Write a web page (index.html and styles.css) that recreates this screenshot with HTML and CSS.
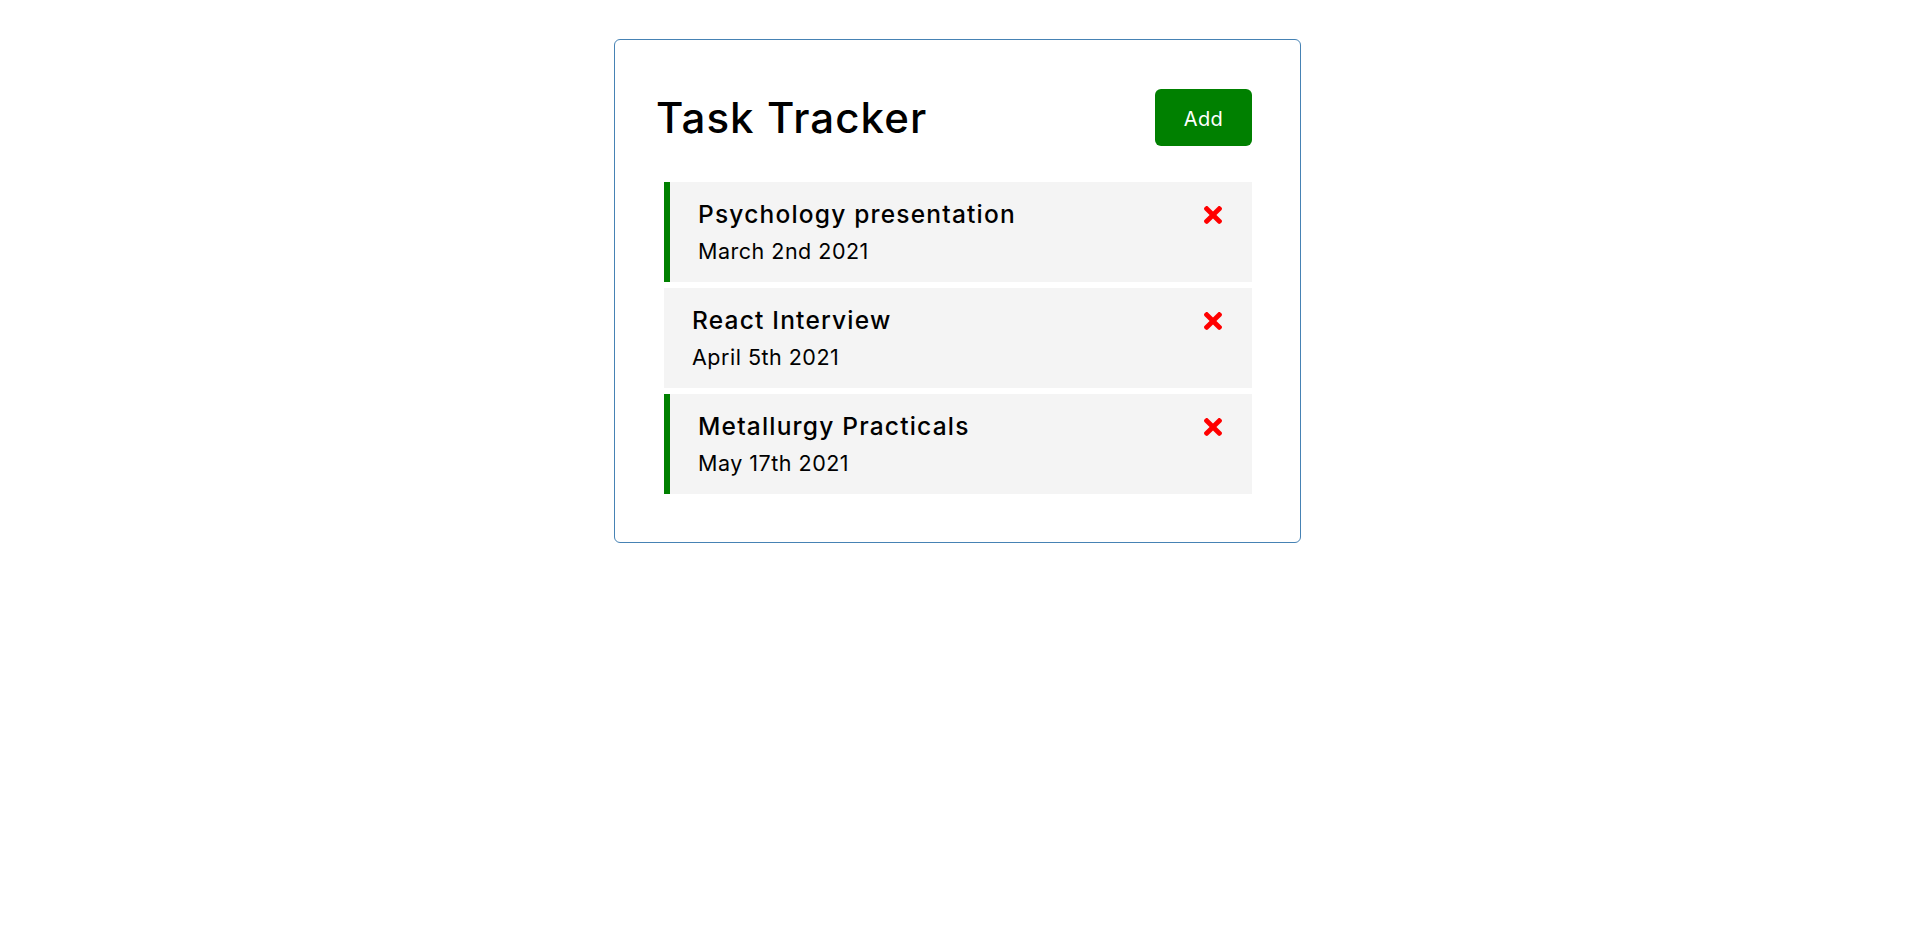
FILE: index.html
```html
<!DOCTYPE html>
<html lang="en">
<head>
<meta charset="utf-8">
<title>Task Tracker</title>
<link rel="stylesheet" href="styles.css">
</head>
<body>
<svg class="defs" aria-hidden="true">
  <symbol id="times" viewBox="0 80 352 352">
    <path d="M242.72 256l100.07-100.07c12.28-12.28 12.28-32.19 0-44.48l-22.24-22.24c-12.28-12.28-32.19-12.28-44.48 0L176 189.28 75.930 89.21c-12.28-12.28-32.19-12.28-44.48 0L9.21 111.45c-12.28 12.28-12.28 32.19 0 44.48L109.28 256 9.21 356.07c-12.28 12.28-12.28 32.19 0 44.48l22.24 22.24c12.28 12.28 32.2 12.28 44.48 0L176 322.72l100.07 100.07c12.28 12.28 32.2 12.28 44.48 0l22.24-22.24c12.28-12.28 12.28-32.19 0-44.48L242.72 256z"/>
  </symbol>
</svg>
<div class="page">
  <div class="container">
    <header class="header">
      <h1 class="title">Task Tracker</h1>
      <button class="btn">Add</button>
    </header>
    <div class="tasks">
      <div class="task reminder">
        <h3 class="task-title">Psychology presentation
          <svg class="del" aria-hidden="true"><use href="#times"/></svg>
        </h3>
        <p class="task-date">March 2nd 2021</p>
      </div>
      <div class="task">
        <h3 class="task-title">React Interview
          <svg class="del" aria-hidden="true"><use href="#times"/></svg>
        </h3>
        <p class="task-date">April 5th 2021</p>
      </div>
      <div class="task reminder">
        <h3 class="task-title">Metallurgy Practicals
          <svg class="del" aria-hidden="true"><use href="#times"/></svg>
        </h3>
        <p class="task-date">May 17th 2021</p>
      </div>
    </div>
  </div>
</div>
</body>
</html>
```
FILE: styles.css
```css
* {
  box-sizing: border-box;
  margin: 0;
  padding: 0;
}

body {
  background: #fff;
  font-family: Inter, "Noto Sans", "DejaVu Sans", sans-serif;
  color: #000;
}

.defs {
  display: none;
}

.page {
  display: flex;
  justify-content: center;
  padding-top: 39px;
  padding-right: 3px;
}

.container {
  width: 687px;
  height: 504px;
  border: 1px solid #4682b4;
  border-radius: 6px;
  padding: 49px 41px 48px 41px;
}

.header {
  display: flex;
  justify-content: space-between;
  align-items: center;
  margin-bottom: 36px;
}

.title {
  font-size: 42px;
  font-weight: 500;
  line-height: 1.2;
  letter-spacing: 1.1px;
  padding-top: 2px;
}

.btn {
  width: 97px;
  height: 57px;
  margin-right: 7px;
  border: none;
  border-radius: 6px;
  background: #008000;
  color: #fff;
  font-family: inherit;
  font-size: 20px;
  font-weight: 400;
  letter-spacing: 0.4px;
  padding-top: 2px;
  display: flex;
  align-items: center;
  justify-content: center;
  cursor: pointer;
}

.tasks {
  display: flex;
  flex-direction: column;
  gap: 6px;
  margin: 0 7px 0 8px;
}

.task {
  background: #f4f4f4;
  height: 100px;
  padding: 15px 30px 10px 28px;
  cursor: pointer;
}

.task.reminder {
  border-left: 6px solid #008000;
}

.task-title {
  display: flex;
  justify-content: space-between;
  align-items: center;
  font-size: 24.5px;
  font-weight: 500;
  line-height: 34px;
  letter-spacing: 1.2px;
}

.del {
  width: 18px;
  height: 18px;
  fill: #ff0000;
  flex: none;
  margin-top: 1px;
}

.task-date {
  font-size: 21.5px;
  font-weight: 400;
  line-height: 40px;
  letter-spacing: 0.5px;
}
```
